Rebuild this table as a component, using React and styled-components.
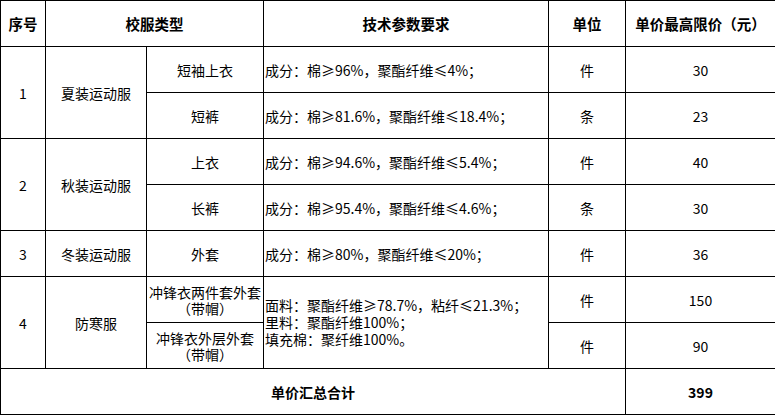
import styled, { createGlobalStyle } from "styled-components"

const Global = createGlobalStyle`
  html, body {
    margin: 0;
    padding: 0;
    background: #fff;
  }
  body {
    font-family: "Noto Sans CJK SC", "Noto Sans", sans-serif;
    color: #000;
  }
`

const Table = styled.table`
  width: 775px;
  table-layout: fixed;
  border-collapse: collapse;
  font-size: 14px;
`

const Row = styled.tr`
  height: 46px;
`

const Cell = styled.td`
  border: 1px solid #000;
  padding: 0;
  text-align: ${p => (p.$left ? "left" : "center")};
  vertical-align: middle;
  font-weight: ${p => (p.$bold ? 700 : 400)};
  line-height: 16px;
  padding-left: ${p => (p.$left ? "1px" : "0")};
  overflow: hidden;
`

const SpecLine = styled.div`
  line-height: 17px;
  white-space: nowrap;
`

const HeadCell = styled(Cell).attrs({ as: "th" })`
  font-weight: 700;
  font-size: 14.5px;
`

const widths = [45, 101, 117, 285, 77, 150]

const rows = [
  { no: "1", type: "夏装运动服", span: 2, item: "短袖上衣", spec: "成分：棉≥96%，聚酯纤维≤4%；", unit: "件", price: "30" },
  { item: "短裤", spec: "成分：棉≥81.6%，聚酯纤维≤18.4%；", unit: "条", price: "23" },
  { no: "2", type: "秋装运动服", span: 2, item: "上衣", spec: "成分：棉≥94.6%，聚酯纤维≤5.4%；", unit: "件", price: "40" },
  { item: "长裤", spec: "成分：棉≥95.4%，聚酯纤维≤4.6%；", unit: "条", price: "30" },
  { no: "3", type: "冬装运动服", span: 1, item: "外套", spec: "成分：棉≥80%，聚酯纤维≤20%；", unit: "件", price: "36" },
]

const winterSpec = [
  "面料：聚酯纤维≥78.7%，粘纤≤21.3%；",
  "里料：聚酯纤维100%；",
  "填充棉：聚纤维100%。",
]

export default function App() {
  return (
    <>
      <Global />
      <Table>
        <colgroup>
          {widths.map((w, i) => <col key={i} style={{ width: w }} />)}
        </colgroup>
        <thead>
          <Row>
            <HeadCell>序号</HeadCell>
            <HeadCell colSpan={2}>校服类型</HeadCell>
            <HeadCell>技术参数要求</HeadCell>
            <HeadCell>单位</HeadCell>
            <HeadCell>单价最高限价（元）</HeadCell>
          </Row>
        </thead>
        <tbody>
          {rows.map((r, i) => (
            <Row key={i}>
              {r.no && <Cell rowSpan={r.span}>{r.no}</Cell>}
              {r.type && <Cell rowSpan={r.span}>{r.type}</Cell>}
              <Cell>{r.item}</Cell>
              <Cell $left>{r.spec}</Cell>
              <Cell>{r.unit}</Cell>
              <Cell>{r.price}</Cell>
            </Row>
          ))}
          <Row>
            <Cell rowSpan={2}>4</Cell>
            <Cell rowSpan={2}>防寒服</Cell>
            <Cell>冲锋衣两件套外套（带帽）</Cell>
            <Cell $left rowSpan={2}>
              {winterSpec.map(s => <SpecLine key={s}>{s}</SpecLine>)}
            </Cell>
            <Cell>件</Cell>
            <Cell>150</Cell>
          </Row>
          <Row>
            <Cell>冲锋衣外层外套（带帽）</Cell>
            <Cell>件</Cell>
            <Cell>90</Cell>
          </Row>
          <Row>
            <Cell $bold colSpan={5}>单价汇总合计</Cell>
            <Cell $bold>399</Cell>
          </Row>
        </tbody>
      </Table>
    </>
  )
}
